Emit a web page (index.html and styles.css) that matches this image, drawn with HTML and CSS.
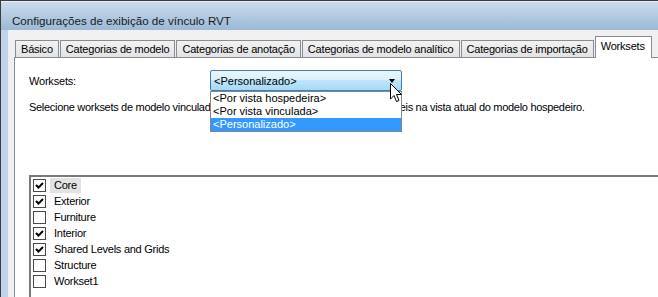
FILE: index.html
```html
<!DOCTYPE html>
<html lang="pt">
<head>
  <meta charset="UTF-8">
  <title>Configurações de exibição de vínculo RVT</title>
  <link rel="stylesheet" href="styles.css">
</head>
<body>
  <div class="window">
    <div class="titlebar">Configurações de exibição de vínculo RVT</div>
    <div class="frame">
      <div class="frame-left"></div>
      <div class="dialog">
        <div class="tabs">
          <div class="tab">Básico</div>
          <div class="tab">Categorias de modelo</div>
          <div class="tab">Categorias de anotação</div>
          <div class="tab">Categorias de modelo analítico</div>
          <div class="tab">Categorias de importação</div>
          <div class="tab active">Worksets</div>
        </div>
        <div class="panel">
          <div class="field-row">
            <label class="field-label">Worksets:</label>
            <div class="combo-wrap">
              <div class="combo">
                <span>&lt;Personalizado&gt;</span>
                <span class="combo-arrow"></span>
              </div>
              <ul class="dropdown">
                <li>&lt;Por vista hospedeira&gt;</li>
                <li>&lt;Por vista vinculada&gt;</li>
                <li class="selected">&lt;Personalizado&gt;</li>
              </ul>
              <svg class="cursor" width="13" height="20" viewBox="0 0 13 20">
                <path d="M0.5 0.5 L0.5 16 L4 12.5 L6.5 18.5 L9 17.5 L6.5 11.5 L11.5 11.5 Z" fill="#fff" stroke="#000" stroke-width="1"/>
              </svg>
            </div>
          </div>
          <p class="hint">Selecione worksets de modelo vinculado que deverão ficar abertos ou estar visíveis na vista atual do modelo hospedeiro.</p>
          <div class="listbox">
            <div class="item"><span class="check"><svg width="11" height="11" viewBox="0 0 11 11"><path d="M2 5 L4.5 7.5 L9 3" fill="none" stroke="#000" stroke-width="2"/></svg></span><span class="name focus">Core</span></div>
            <div class="item"><span class="check"><svg width="11" height="11" viewBox="0 0 11 11"><path d="M2 5 L4.5 7.5 L9 3" fill="none" stroke="#000" stroke-width="2"/></svg></span><span class="name">Exterior</span></div>
            <div class="item"><span class="check"></span><span class="name">Furniture</span></div>
            <div class="item"><span class="check"><svg width="11" height="11" viewBox="0 0 11 11"><path d="M2 5 L4.5 7.5 L9 3" fill="none" stroke="#000" stroke-width="2"/></svg></span><span class="name">Interior</span></div>
            <div class="item"><span class="check"><svg width="11" height="11" viewBox="0 0 11 11"><path d="M2 5 L4.5 7.5 L9 3" fill="none" stroke="#000" stroke-width="2"/></svg></span><span class="name">Shared Levels and Grids</span></div>
            <div class="item"><span class="check"></span><span class="name">Structure</span></div>
            <div class="item"><span class="check"></span><span class="name">Workset1</span></div>
          </div>
        </div>
      </div>
    </div>
  </div>
</body>
</html>
```

FILE: styles.css
```css
html, body {
  margin: 0;
  padding: 0;
  width: 658px;
  height: 297px;
  overflow: hidden;
  background: #fff;
}
body {
  font-family: "Liberation Sans", Arial, sans-serif;
  font-size: 11px;
  color: #000;
}
.window {
  width: 658px;
  height: 297px;
  border-top: 1px solid #3c3c3c;
  border-left: 1px solid #3c3c3c;
  box-sizing: border-box;
  display: flex;
  flex-direction: column;
}
.titlebar {
  height: 29px;
  line-height: 37px;
  padding-left: 11px;
  font-size: 11.6px;
  color: #1a1a1a;
  background: linear-gradient(#cadbed, #9cb9d6);
  border-top: 1px solid #e6eef7;
  box-sizing: border-box;
  flex: none;
}
.frame {
  flex: 1;
  display: flex;
  min-height: 0;
}
.frame-left {
  flex: none;
  width: 7px;
  background: #bfd4ec;
}
.dialog {
  flex: 1;
  min-width: 0;
  background: #f0f0f0;
  padding: 6px 0 0 6px;
  display: flex;
  flex-direction: column;
  min-height: 0;
}
.tabs {
  display: flex;
  align-items: flex-end;
  height: 21px;
  padding-left: 1px;
  flex: none;
}
.tab {
  flex: none;
  height: 17px;
  line-height: 17px;
  padding: 0 5px;
  margin-right: 1px;
  border: 1px solid #898c95;
  border-bottom: none;
  background: linear-gradient(#f2f2f2, #e3e3e3);
  box-sizing: border-box;
  white-space: nowrap;
  letter-spacing: -0.2px;
}
.tab.active {
  height: 22px;
  line-height: 19px;
  padding: 0 6px 0 5px;
  margin-bottom: -1px;
  background: #fff;
  position: relative;
  z-index: 1;
}
.panel {
  flex: 1;
  background: #fff;
  border: 1px solid #898c95;
  border-right: none;
  padding: 12px 0 0 14px;
  position: relative;
}
.field-row {
  display: flex;
  align-items: center;
  height: 21px;
}
.field-label {
  width: 181px;
  letter-spacing: -0.2px;
}
.combo-wrap {
  position: relative;
  width: 192px;
}
.combo {
  height: 21px;
  border: 1px solid #3c7fb1;
  border-radius: 2px;
  background: linear-gradient(#eaf6fd 0%, #d9f0fc 45%, #bee6fd 50%, #a7d9f5 100%);
  box-sizing: border-box;
  display: flex;
  align-items: center;
  justify-content: space-between;
  padding: 0 4px 0 3px;
}
.combo-arrow {
  width: 0;
  height: 0;
  border-left: 3.5px solid transparent;
  border-right: 3.5px solid transparent;
  border-top: 4px solid #000;
  margin-right: 2px;
}
.dropdown {
  position: absolute;
  top: 21px;
  left: 0;
  width: 192px;
  margin: 0;
  padding: 0;
  list-style: none;
  background: #fff;
  border: 1px solid #828790;
  box-sizing: border-box;
  z-index: 5;
}
.dropdown li {
  height: 13px;
  line-height: 13px;
  padding-left: 2px;
}
.dropdown li.selected {
  background: #3399ff;
  color: #fff;
}
.cursor {
  position: absolute;
  left: 180px;
  top: 13px;
  z-index: 6;
}
.hint {
  margin: 10px 0 0;
  line-height: 13px;
  white-space: nowrap;
  letter-spacing: -0.3px;
}
.listbox {
  margin-top: 61px;
  border-top: 2px solid #7a7a7a;
  border-left: 2px solid #7a7a7a;
  height: 200px;
}
.item {
  display: flex;
  align-items: center;
  height: 16px;
  padding-left: 2px;
}
.check {
  width: 13px;
  height: 13px;
  border: 1px solid #4a4a4a;
  box-sizing: border-box;
  background: #fff;
  display: flex;
  align-items: center;
  justify-content: center;
}
.check svg {
  display: block;
}
.name {
  margin-left: 4px;
  padding: 0 4px;
  height: 15px;
  line-height: 15px;
  letter-spacing: -0.25px;
}
.name.focus {
  background: #e3e3e3;
}
```
